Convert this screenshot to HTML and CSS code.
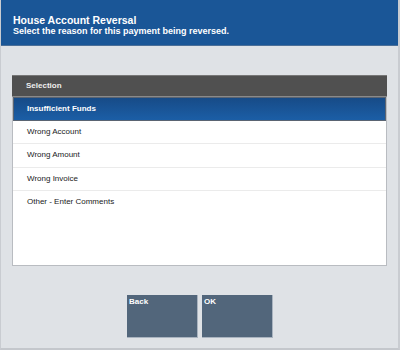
FILE: index.html
```html
<!DOCTYPE html>
<html lang="en">
<head>
  <meta charset="UTF-8" />
  <title>House Account Reversal</title>
  <link rel="stylesheet" href="styles.css">
</head>
<body>
  <div id="screen">
    <div id="header">
      <div class="title">House Account Reversal</div>
      <div class="subtitle">Select the reason for this payment being reversed.</div>
    </div>

    <div id="content">
      <div id="panel">
        <div class="panel-head">Selection</div>
        <ul id="choices">
          <li class="selected">Insufficient Funds</li>
          <li>Wrong Account</li>
          <li>Wrong Amount</li>
          <li>Wrong Invoice</li>
          <li>Other - Enter Comments</li>
        </ul>
      </div>

      <div id="buttons">
        <button type="button">Back</button>
        <button type="button">OK</button>
      </div>
    </div>
  </div>
</body>
</html>
```

FILE: styles.css
```css
body {
  margin: 0;
  font-family: "Liberation Sans", Arial, Helvetica, sans-serif;
  background: #dfe2e6;
}

#screen {
  width: 400px;
  height: 350px;
  box-sizing: border-box;
  display: flex;
  flex-direction: column;
  border-left: 1px solid #c9ccd1;
  border-right: 2px solid #c9ccd1;
  border-bottom: 2px solid #c4c7cc;
  overflow: hidden;
}

#header {
  background: #1a5697;
  color: #fff;
  height: 46px;
  box-sizing: border-box;
  padding: 14px 12px 0 13px;
  font-weight: bold;
  border-bottom: 1px solid #4b6f98;
  margin-left: -1px;
  margin-right: -2px;
  flex-shrink: 0;
}

#header .title {
  font-size: 10.5px;
  line-height: 12px;
}

#header .subtitle {
  font-size: 9px;
  line-height: 11px;
}

#content {
  flex: 1;
  display: flex;
  flex-direction: column;
  padding: 29px 11px 0 11px;
}

#panel {
  height: 190px;
  background: #fff;
  border: 1px solid #b9bcc1;
  border-top: none;
  display: flex;
  flex-direction: column;
}

.panel-head {
  background: #505050;
  color: #eee;
  font-size: 8px;
  font-weight: bold;
  height: 20px;
  line-height: 20px;
  padding-left: 14px;
  border-top: 1px solid #777;
  border-bottom: 1px solid #8a8a8a;
  margin: 0 -1px;
  flex-shrink: 0;
}

#choices {
  list-style: none;
  margin: 0;
  padding: 0;
}

#choices li {
  height: 22.35px;
  line-height: 22px;
  font-size: 8px;
  color: #222;
  padding-left: 14px;
  border-bottom: 1px solid #ebebeb;
}

#choices li.selected {
  background: linear-gradient(#174b87, #1b5ea6);
  color: #fff;
  font-weight: bold;
  border: 1px solid #5a6472;
  height: 22px;
  line-height: 22px;
  padding-left: 13px;
}

#choices li:last-child {
  border-bottom: none;
}

#buttons {
  display: flex;
  justify-content: center;
  gap: 4px;
  margin-top: 29px;
  padding-left: 1px;
}

#buttons button {
  width: 71px;
  height: 43px;
  background: #52667b;
  color: #fff;
  border: none;
  border-right: 1px solid #aab4c0;
  border-bottom: 1px solid #aab4c0;
  font-family: inherit;
  font-size: 8px;
  font-weight: bold;
  text-align: left;
  padding: 2px 2px;
  display: flex;
  align-items: flex-start;
}
```
